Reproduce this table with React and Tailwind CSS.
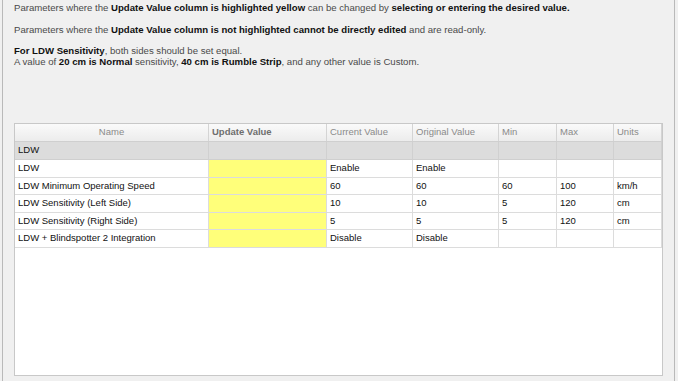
export default function App() {
  const cols = [
    { key: "name", label: "Name", w: "w-[194px]", center: true },
    { key: "update", label: "Update Value", w: "w-[118px]", bold: true },
    { key: "current", label: "Current Value", w: "w-[86px]" },
    { key: "original", label: "Original Value", w: "w-[86px]" },
    { key: "min", label: "Min", w: "w-[58px]" },
    { key: "max", label: "Max", w: "w-[57px]" },
    { key: "units", label: "Units", w: "flex-1" },
  ];
  const rows = [
    ["LDW", "", "Enable", "Enable", "", "", ""],
    ["LDW Minimum Operating Speed", "", "60", "60", "60", "100", "km/h"],
    ["LDW Sensitivity (Left Side)", "", "10", "10", "5", "120", "cm"],
    ["LDW Sensitivity (Right Side)", "", "5", "5", "5", "120", "cm"],
    ["LDW + Blindspotter 2 Integration", "", "Disable", "Disable", "", "", ""],
  ];
  return (
    <div className="w-[678px] h-[381px] bg-[#f0f0f0] overflow-hidden" style={{ fontFamily: '"Liberation Sans", Arial, sans-serif' }}>
      <div className="ml-[2px] mr-[3px] h-full border-x border-[#b9b9b9] pl-[11px]">
        <div className="text-[9.6px] leading-[11px] text-[#4a4a4a]">
          <p className="pt-[2px]">
            Parameters where the <b className="text-[#111]">Update Value column is highlighted yellow</b> can be changed by{" "}
            <b className="text-[#111]">selecting or entering the desired value.</b>
          </p>
          <p className="mt-[11px]">
            Parameters where the <b className="text-[#111]">Update Value column is not highlighted cannot be directly edited</b> and are read-only.
          </p>
          <p className="mt-[10px]">
            <b className="text-[#111]">For LDW Sensitivity</b>, both sides should be set equal.
          </p>
          <p>
            A value of <b className="text-[#111]">20 cm is Normal</b> sensitivity, <b className="text-[#111]">40 cm is Rumble Strip</b>, and any other value is Custom.
          </p>
        </div>
        <div className="mt-[56px] w-[649px] h-[253px] border border-[#c8c8c8] bg-white text-[9.5px]">
          <div className="flex h-[18px] bg-gradient-to-b from-[#fafafa] to-[#ececec] border-b border-[#cfcfcf]">
            {cols.map((c) => (
              <div
                key={c.key}
                className={`${c.w} border-r border-[#d4d4d4] flex items-center px-[3px] ${c.center ? "justify-center" : ""} ${
                  c.bold ? "font-bold text-[#6e6e6e]" : "text-[#8a8a8a]"
                }`}
              >
                {c.label}
              </div>
            ))}
          </div>
          <div className="flex h-[18px] bg-[#dcdcdc] border-b border-[#cfcfcf]">
            {cols.map((c, i) => (
              <div key={c.key} className={`${c.w} border-r border-[#d0d0d0] flex items-center px-[3px] text-[#111]`}>
                {i === 0 ? "LDW" : ""}
              </div>
            ))}
          </div>
          {rows.map((r, ri) => (
            <div key={ri} className="flex h-[17.5px] border-b border-[#dcdcdc]">
              {cols.map((c, i) => (
                <div
                  key={c.key}
                  className={`${c.w} border-r border-[#dcdcdc] flex items-center px-[3px] text-[#111] ${
                    i === 1 ? "bg-[#ffff7a]" : ""
                  }`}
                >
                  {r[i]}
                </div>
              ))}
            </div>
          ))}
        </div>
      </div>
    </div>
  );
}
